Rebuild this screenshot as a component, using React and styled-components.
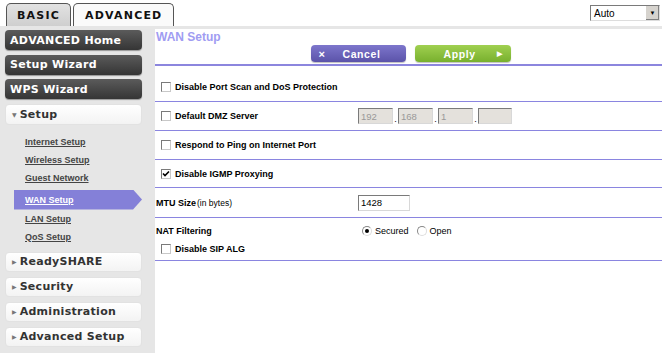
import React from 'react';
import styled, { createGlobalStyle } from 'styled-components';

const GlobalStyle = createGlobalStyle`
  html, body {
    margin: 0;
    padding: 0;
    background: #fff;
    font-family: "Liberation Sans", Arial, sans-serif;
  }
`;

const Page = styled.div`
  width: 662px;
  height: 353px;
  display: flex;
  flex-direction: column;
  overflow: hidden;
`;

const Header = styled.div`
  height: 26px;
  display: flex;
  align-items: flex-start;
  padding: 3px 2px 0 6px;
  box-sizing: border-box;
  background: #fff;
`;

const Tabs = styled.div`
  display: flex;
  gap: 2px;
  flex: 1;
`;

const Tab = styled.div`
  height: 23px;
  padding: 0 ${p => (p.$active ? 11 : 10)}px;
  display: flex;
  align-items: center;
  box-sizing: border-box;
  border: 1px solid #555;
  border-bottom: none;
  border-radius: 5px 5px 0 0;
  background: ${p => (p.$active ? '#fafafa' : 'linear-gradient(#e2e2e2, #cfcfcf)')};
  color: #111;
  font-family: "DejaVu Sans", Verdana, sans-serif;
  font-weight: bold;
  font-size: 11px;
  letter-spacing: 1.2px;
`;

const Select = styled.div`
  margin-top: 2px;
  width: 70px;
  height: 16px;
  box-sizing: border-box;
  border: 1px solid #7a7a7a;
  border-right-color: #ddd;
  border-bottom-color: #ddd;
  display: flex;
  align-items: center;
  background: #fff;
  font-size: 10px;
  color: #000;
  padding-left: 3px;
`;

const SelectText = styled.span`
  flex: 1;
`;

const SelectArrow = styled.span`
  width: 13px;
  height: 14px;
  background: #d6d3ce;
  border-left: 1px solid #fff;
  box-shadow: inset -1px -1px 0 #808080;
  display: flex;
  align-items: center;
  justify-content: center;
  font-size: 6px;
  color: #000;
`;

const Strip = styled.div`
  height: 3px;
  background: #e6e6e6;
`;

const Body = styled.div`
  flex: 1;
  display: flex;
`;

const Sidebar = styled.div`
  width: 155px;
  background: #e6e6e6;
  padding: 1px 13px 0 5px;
  box-sizing: border-box;
  display: flex;
  flex-direction: column;
`;

const MenuButton = styled.div`
  height: ${p => p.$h || 20}px;
  margin-bottom: ${p => p.$gap ?? 4.5}px;
  border-radius: 4px;
  box-sizing: border-box;
  display: flex;
  align-items: center;
  padding-left: ${p => (p.$dark ? 5 : 6)}px;
  font-family: "DejaVu Sans", Verdana, sans-serif;
  font-weight: bold;
  font-size: 11px;
  letter-spacing: 0.3px;
  ${p => p.$dark
    ? `background: linear-gradient(#5b5b5b, #353535);
       color: #fff;
       box-shadow: 0 1px 1px rgba(0,0,0,0.35);`
    : `background: linear-gradient(#ffffff, #f3f3f3);
       color: #333;
       border: 1px solid #e2e2e2;`}
`;

const Caret = styled.span`
  font-size: 6px;
  color: #777;
  margin-right: 3px;
  letter-spacing: 0;
`;

const SubMenu = styled.div`
  display: flex;
  flex-direction: column;
  padding: 8px 0 6px;
`;

const SubItem = styled.div`
  height: ${p => (p.$selected ? 20 : 18)}px;
  margin: ${p => (p.$selected ? '3px 0 0 9px' : '0')};
  padding-left: ${p => (p.$selected ? 11 : 20)}px;
  display: flex;
  align-items: center;
  font-size: 9px;
  font-weight: bold;
  text-decoration: underline;
  color: ${p => (p.$selected ? '#fff' : '#444')};
  background: ${p => (p.$selected ? '#8480d8' : 'transparent')};
  clip-path: ${p => (p.$selected ? 'polygon(0 0, 93% 0, 100% 50%, 93% 100%, 0 100%)' : 'none')};
`;

const Main = styled.div`
  flex: 1;
  background: #fff;
  display: flex;
  flex-direction: column;
`;

const TitleBlock = styled.div`
  padding: 1px 0 2px 1px;
  border-bottom: 2px solid #8c86de;
`;

const Title = styled.div`
  font-size: 12px;
  font-weight: bold;
  color: #a09cf2;
  line-height: 14px;
`;

const Actions = styled.div`
  display: flex;
  justify-content: center;
  gap: 9px;
  margin-top: 1px;
  padding-left: 3px;
`;

const ActionButton = styled.div`
  width: ${p => p.$w}px;
  height: 17px;
  border-radius: 4px;
  box-sizing: border-box;
  display: flex;
  align-items: center;
  padding: 0 8px;
  color: #fff;
  font-size: 10.5px;
  font-weight: bold;
  letter-spacing: 0.6px;
  background: ${p => p.$bg};
  box-shadow: 0 1px 1px rgba(0,0,0,0.25);
`;

const ActionLabel = styled.span`
  flex: 1;
  text-align: center;
`;

const ActionIcon = styled.span`
  font-size: ${p => p.$size || 10}px;
`;

const Rows = styled.div`
  padding-top: 7px;
`;

const Row = styled.div`
  display: grid;
  grid-template-columns: 202px 1fr;
  align-items: center;
  height: ${p => p.$h || 28}px;
  padding-left: 1px;
  border-bottom: 1px solid #8a85e0;
`;

const StackRow = styled.div`
  display: flex;
  flex-direction: column;
  padding: 6px 0 4px 1px;
  border-bottom: 1px solid #8a85e0;
`;

const Line = styled.div`
  display: grid;
  grid-template-columns: 202px 1fr;
  align-items: center;
  height: ${p => p.$h || 14}px;
  margin-top: ${p => p.$mt || 0}px;
`;

const Label = styled.label`
  display: flex;
  align-items: center;
  font-size: 9px;
  font-weight: bold;
  color: #000;
  padding-left: ${p => (p.$boxed ? 5 : 0)}px;
`;

const Small = styled.span`
  font-weight: normal;
  font-size: 8.5px;
  margin-left: 1px;
`;

const Box = styled.span`
  width: 10px;
  height: 10px;
  box-sizing: border-box;
  border: 1px solid #7a7a7a;
  border-right-color: #c8c8c8;
  border-bottom-color: #c8c8c8;
  background: #fff;
  margin-right: 4px;
  display: flex;
  align-items: center;
  justify-content: center;
`;

const Field = styled.div`
  width: ${p => p.$w}px;
  height: 16px;
  box-sizing: border-box;
  border: 1px solid #7a7a7a;
  border-right-color: #d8d8d8;
  border-bottom-color: #d8d8d8;
  background: ${p => (p.$disabled ? '#e4e1dc' : '#fff')};
  color: ${p => (p.$disabled ? '#999' : '#000')};
  font-size: 9.5px;
  padding-left: 2px;
  display: flex;
  align-items: center;
`;

const IpGroup = styled.div`
  display: flex;
  align-items: flex-end;
`;

const Dot = styled.span`
  width: 5px;
  text-align: center;
  font-size: 9px;
  color: #000;
  line-height: 10px;
`;

const Radios = styled.div`
  display: flex;
  align-items: center;
  padding-left: 4px;
  font-size: 9px;
  color: #000;
`;

const Radio = styled.span`
  width: 10px;
  height: 10px;
  box-sizing: border-box;
  border-radius: 50%;
  border: 1px solid #888;
  border-right-color: #ddd;
  border-bottom-color: #ddd;
  background: #fff;
  display: inline-flex;
  align-items: center;
  justify-content: center;
  margin-right: 3px;
  &::after {
    content: '';
    width: 4px;
    height: 4px;
    border-radius: 50%;
    background: ${p => (p.$on ? '#000' : 'transparent')};
  }
`;

const RadioText = styled.span`
  margin-right: 8px;
`;

function Check({ on }) {
  return (
    <Box>
      {on && (
        <svg width="8" height="8" viewBox="0 0 8 8">
          <path d="M1 3.5 L3 5.5 L7 1.5" stroke="#000" strokeWidth="1.6" fill="none" />
        </svg>
      )}
    </Box>
  );
}

export default function App() {
  return (
    <Page>
      <GlobalStyle />
      <Header>
        <Tabs>
          <Tab>BASIC</Tab>
          <Tab $active>ADVANCED</Tab>
        </Tabs>
        <Select>
          <SelectText>Auto</SelectText>
          <SelectArrow>▼</SelectArrow>
        </Select>
      </Header>
      <Strip />
      <Body>
        <Sidebar>
          <MenuButton $dark>ADVANCED Home</MenuButton>
          <MenuButton $dark>Setup Wizard</MenuButton>
          <MenuButton $dark>WPS Wizard</MenuButton>
          <MenuButton $h={21} $gap={0}><Caret>▼</Caret>Setup</MenuButton>
          <SubMenu>
            <SubItem>Internet Setup</SubItem>
            <SubItem>Wireless Setup</SubItem>
            <SubItem>Guest Network</SubItem>
            <SubItem $selected>WAN Setup</SubItem>
            <SubItem>LAN Setup</SubItem>
            <SubItem>QoS Setup</SubItem>
          </SubMenu>
          <MenuButton $gap={5}><Caret>▶</Caret>ReadySHARE</MenuButton>
          <MenuButton $gap={5}><Caret>▶</Caret>Security</MenuButton>
          <MenuButton $gap={5}><Caret>▶</Caret>Administration</MenuButton>
          <MenuButton $gap={5}><Caret>▶</Caret>Advanced Setup</MenuButton>
        </Sidebar>
        <Main>
          <TitleBlock>
            <Title>WAN Setup</Title>
            <Actions>
              <ActionButton $w={95} $bg="linear-gradient(#7d76cc, #5b53a9)">
                <ActionIcon $size={11}>×</ActionIcon>
                <ActionLabel>Cancel</ActionLabel>
              </ActionButton>
              <ActionButton $w={96} $bg="linear-gradient(#a0d050, #78b02e)">
                <ActionLabel>Apply</ActionLabel>
                <ActionIcon $size={7}>▶</ActionIcon>
              </ActionButton>
            </Actions>
          </TitleBlock>
          <Rows>
            <Row>
              <Label $boxed><Check />Disable Port Scan and DoS Protection</Label>
            </Row>
            <Row>
              <Label $boxed><Check />Default DMZ Server</Label>
              <IpGroup>
                <Field $w={35} $disabled>192</Field>
                <Dot>.</Dot>
                <Field $w={35} $disabled>168</Field>
                <Dot>.</Dot>
                <Field $w={35} $disabled>1</Field>
                <Dot>.</Dot>
                <Field $w={34} $disabled></Field>
              </IpGroup>
            </Row>
            <Row>
              <Label $boxed><Check />Respond to Ping on Internet Port</Label>
            </Row>
            <Row $h={27}>
              <Label $boxed><Check on />Disable IGMP Proxying</Label>
            </Row>
            <Row $h={29}>
              <Label>MTU Size<Small>(in bytes)</Small></Label>
              <Field $w={52}>1428</Field>
            </Row>
            <StackRow>
              <Line>
                <Label>NAT Filtering</Label>
                <Radios>
                  <Radio $on /><RadioText>Secured</RadioText>
                  <Radio /><RadioText>Open</RadioText>
                </Radios>
              </Line>
              <Line $mt={4}>
                <Label $boxed><Check />Disable SIP ALG</Label>
              </Line>
            </StackRow>
          </Rows>
        </Main>
      </Body>
    </Page>
  );
}
